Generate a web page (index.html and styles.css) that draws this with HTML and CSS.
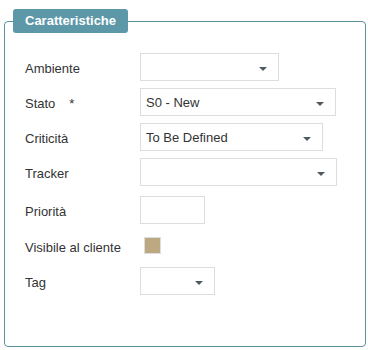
FILE: index.html
```html
<!DOCTYPE html>
<html lang="it">

<head>
    <meta charset="UTF-8">
    <meta name="viewport" content="width=device-width, initial-scale=1.0">
    <title>Caratteristiche</title>
    <link rel="stylesheet" href="styles.css">
</head>

<body>
    <fieldset class="panel">
        <legend>Caratteristiche</legend>

        <!-- Ambiente -->
        <div class="row">
            <label>Ambiente</label>
            <div class="select w-ambiente">
                <span class="value"></span>
                <svg class="caret" width="8" height="4" viewBox="0 0 8 4"><polygon points="0,0 8,0 4,4" /></svg>
            </div>
        </div>

        <!-- Stato -->
        <div class="row">
            <label>Stato<span class="req">*</span></label>
            <div class="select w-stato">
                <span class="value">S0 - New</span>
                <svg class="caret" width="8" height="4" viewBox="0 0 8 4"><polygon points="0,0 8,0 4,4" /></svg>
            </div>
        </div>

        <!-- Criticita -->
        <div class="row">
            <label>Criticità</label>
            <div class="select w-criticita">
                <span class="value">To Be Defined</span>
                <svg class="caret" width="8" height="4" viewBox="0 0 8 4"><polygon points="0,0 8,0 4,4" /></svg>
            </div>
        </div>

        <!-- Tracker -->
        <div class="row row-tracker">
            <label>Tracker</label>
            <div class="select w-tracker">
                <span class="value"></span>
                <svg class="caret" width="8" height="4" viewBox="0 0 8 4"><polygon points="0,0 8,0 4,4" /></svg>
            </div>
        </div>

        <!-- Priorita -->
        <div class="row">
            <label>Priorità</label>
            <div class="input w-priorita"></div>
        </div>

        <!-- Visibile al cliente -->
        <div class="row row-check">
            <label>Visibile al cliente</label>
            <span class="checkbox"></span>
        </div>

        <!-- Tag -->
        <div class="row row-last">
            <label>Tag</label>
            <div class="select w-tag">
                <span class="value"></span>
                <svg class="caret" width="8" height="4" viewBox="0 0 8 4"><polygon points="0,0 8,0 4,4" /></svg>
            </div>
        </div>
    </fieldset>
</body>

</html>
```

FILE: styles.css
```css
body {
    font-family: "Liberation Sans", Arial, sans-serif;
    font-size: 13px;
    color: #333;
    background: #fff;
    margin: 0;
    padding: 0;
}

.panel {
    box-sizing: border-box;
    width: 362px;
    margin: 9px 0 0 4px;
    padding: 20px 0 51px 20px;
    border: 1px solid #5b909c;
    border-radius: 4px;
    min-inline-size: 0;
}

.panel legend {
    margin-left: -12px;
    padding: 0 12px;
    height: 24px;
    line-height: 24px;
    background-color: #5c98a8;
    color: #fff;
    font-weight: bold;
    font-size: 13px;
    border-radius: 3px;
}

.row {
    display: flex;
    align-items: center;
    height: 28px;
    margin-bottom: 7px;
}

.row-tracker {
    margin-bottom: 10px;
}

.row-check {
    height: 29px;
}

.row-last {
    margin-bottom: 0;
}

.row label {
    width: 115px;
    flex-shrink: 0;
    padding-top: 3px;
}

.req {
    margin-left: 14px;
}

.select,
.input {
    box-sizing: border-box;
    height: 28px;
    border: 1px solid #ddd;
    background: #fff;
}

.select {
    display: flex;
    align-items: center;
    padding: 0 11px 0 5px;
}

.select .value {
    flex: 1;
    white-space: nowrap;
}

.caret {
    flex-shrink: 0;
    margin-top: 3px;
    fill: #4f5a60;
}

.w-ambiente {
    width: 139px;
}

.w-stato {
    width: 196px;
}

.w-criticita {
    width: 183px;
}

.w-tracker {
    width: 197px;
}

.w-priorita {
    width: 65px;
}

.w-tag {
    width: 75px;
}

.checkbox {
    box-sizing: border-box;
    width: 17px;
    height: 17px;
    margin-left: 4px;
    border: 1px solid #ddd;
    background-color: #bca981;
}
```
